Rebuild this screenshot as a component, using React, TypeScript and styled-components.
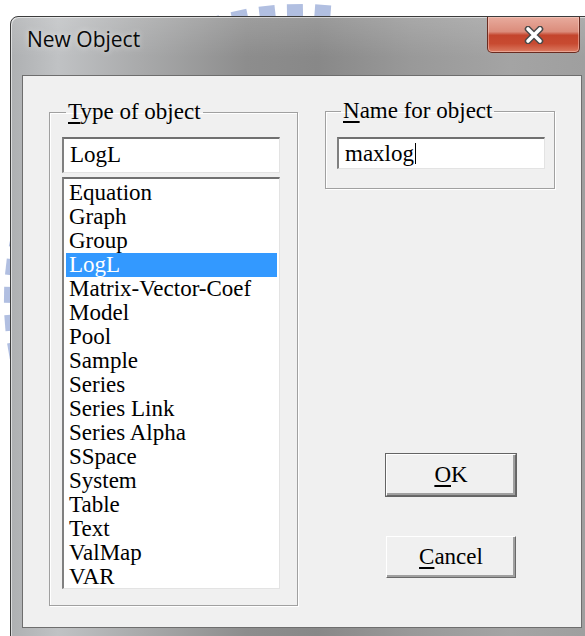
import styled, { createGlobalStyle } from "styled-components";

const GlobalStyle = createGlobalStyle`
  html, body {
    margin: 0;
    padding: 0;
    background: #ffffff;
  }
`;

const OBJECT_TYPES = [
  "Equation",
  "Graph",
  "Group",
  "LogL",
  "Matrix-Vector-Coef",
  "Model",
  "Pool",
  "Sample",
  "Series",
  "Series Link",
  "Series Alpha",
  "SSpace",
  "System",
  "Table",
  "Text",
  "ValMap",
  "VAR",
];

// angles (deg) of the ring segments in the background emblem
const EMBLEM_ANGLES = Array.from({ length: 22 }, (_, i) => -111 + i * 5.5);

const Emblem = () => (
  <S.Emblem width="585" height="636" viewBox="0 0 585 636">
    {EMBLEM_ANGLES.map((a) => (
      <rect
        key={a}
        x={292}
        y={4}
        width={16}
        height={34}
        fill="#b1bfe1"
        transform={`rotate(${a} 300 300)`}
      />
    ))}
  </S.Emblem>
);

const CloseGlyph = () => (
  <svg width="22" height="18" viewBox="0 0 22 18">
    <path
      d="M5 3 L17 15 M17 3 L5 15"
      stroke="#4a4a4a"
      strokeWidth="6.5"
      strokeLinecap="round"
      fill="none"
    />
    <path
      d="M5 3 L17 15 M17 3 L5 15"
      stroke="#ffffff"
      strokeWidth="3.6"
      strokeLinecap="round"
      fill="none"
    />
  </svg>
);

const App = () => {
  return (
    <>
      <GlobalStyle />
      <S.Page>
        <Emblem />
        <S.Window>
          <S.TitleBar>
            <S.Title>New Object</S.Title>
            <S.CloseBtn aria-label="Close">
              <CloseGlyph />
            </S.CloseBtn>
          </S.TitleBar>
          <S.Client>
            <S.TypeGroup>
              <S.Legend>
                <u>T</u>ype of object
              </S.Legend>
              <S.Field $height={36}>LogL</S.Field>
              <S.List>
                {OBJECT_TYPES.map((t) => (
                  <S.ListItem key={t} $selected={t === "LogL"}>
                    {t}
                  </S.ListItem>
                ))}
              </S.List>
            </S.TypeGroup>
            <S.RightColumn>
              <S.NameGroup>
                <S.Legend>
                  <u>N</u>ame for object
                </S.Legend>
                <S.Field $height={32}>
                  maxlog
                  <S.Caret />
                </S.Field>
              </S.NameGroup>
              <S.Buttons>
                <S.Button $default>
                  <u>O</u>K
                </S.Button>
                <S.Button>
                  <u>C</u>ancel
                </S.Button>
              </S.Buttons>
            </S.RightColumn>
          </S.Client>
        </S.Window>
      </S.Page>
    </>
  );
};

const S = {
  Page: styled.div`
    position: relative;
    width: 585px;
    height: 636px;
    overflow: hidden;
    background: #ffffff;
  `,

  Emblem: styled.svg`
    position: absolute;
    top: 0;
    left: 0;
    z-index: 0;
  `,

  Window: styled.div`
    position: relative;
    z-index: 1;
    box-sizing: border-box;
    margin: 16px 0 0 10px;
    width: 590px;
    height: 640px;
    border: 1px solid #3c3c3c;
    border-radius: 8px 8px 0 0;
    background:
      linear-gradient(180deg, rgba(255, 255, 255, 0.15) 0px, rgba(255, 255, 255, 0) 40px),
      linear-gradient(
        90deg,
        #aeb0b2 0%,
        #c0c2c4 8%,
        #a9aaab 22%,
        #8d8d8d 40%,
        #888888 52%,
        #999999 68%,
        #a4a4a4 85%,
        #9e9e9e 100%
      );
    box-shadow: inset 1px 1px 0 rgba(255, 255, 255, 0.55);
  `,

  TitleBar: styled.div`
    display: flex;
    justify-content: space-between;
    align-items: flex-start;
    height: 58px;
    padding-left: 16px;
    padding-right: 19px;
  `,

  Title: styled.div`
    margin-top: 9px;
    font-family: "Open Sans", "Noto Sans", sans-serif;
    font-size: 21px;
    line-height: 26px;
    color: #0a0a0a;
    text-shadow: 0 0 6px rgba(255, 255, 255, 0.7);
  `,

  CloseBtn: styled.button`
    display: flex;
    align-items: center;
    justify-content: center;
    width: 93px;
    height: 36px;
    padding: 0;
    border: 1px solid #6a2b20;
    border-top: none;
    border-radius: 0 0 5px 5px;
    background: linear-gradient(
      180deg,
      #e8ab9d 0%,
      #db8c7b 42%,
      #c4452d 52%,
      #c84a31 76%,
      #db7b62 100%
    );
    box-shadow: inset 0 0 0 1px rgba(255, 220, 210, 0.45);
  `,

  Client: styled.div`
    box-sizing: border-box;
    display: flex;
    align-items: flex-start;
    margin-left: 11px;
    width: 560px;
    height: 553px;
    border: 1px solid #6e6e6e;
    background: #f0f0f0;
    padding: 24px 0 0 26px;
  `,

  TypeGroup: styled.fieldset`
    box-sizing: border-box;
    width: 249px;
    height: 506px;
    margin: 0;
    padding: 13px 17px 16px 12px;
    min-width: 0;
    border: 1px solid #a0a0a0;
    box-shadow: inset 1px 1px 0 #ffffff, 1px 1px 0 #ffffff;
    display: flex;
    flex-direction: column;
  `,

  NameGroup: styled.fieldset`
    box-sizing: border-box;
    width: 230px;
    height: 90px;
    margin: 0;
    padding: 14px 9px 19px 11px;
    min-width: 0;
    border: 1px solid #a0a0a0;
    box-shadow: inset 1px 1px 0 #ffffff, 1px 1px 0 #ffffff;
  `,

  Legend: styled.legend`
    margin-left: 4px;
    padding: 0 2px;
    font-family: "Liberation Serif", "Times New Roman", serif;
    font-size: 23px;
    line-height: 24px;
    color: #000;

    u {
      text-underline-offset: 3px;
    }
  `,

  Field: styled.div<{ $height: number }>`
    box-sizing: border-box;
    display: flex;
    align-items: center;
    height: ${(p) => p.$height}px;
    padding-left: 6px;
    background: #ffffff;
    border-style: solid;
    border-width: 2px 1px 1px 2px;
    border-color: #707070 #e3e3e3 #e3e3e3 #808080;
    font-family: "Liberation Serif", "Times New Roman", serif;
    font-size: 23px;
    color: #000;
  `,

  Caret: styled.span`
    display: inline-block;
    width: 1px;
    height: 21px;
    margin-left: 1px;
    background: #000;
  `,

  List: styled.div`
    box-sizing: border-box;
    margin-top: 4px;
    height: 413px;
    padding: 2px 2px 0 2px;
    background: #ffffff;
    border-style: solid;
    border-width: 2px 1px 1px 2px;
    border-color: #707070 #e3e3e3 #e3e3e3 #808080;
    overflow: hidden;
  `,

  ListItem: styled.div<{ $selected?: boolean }>`
    height: 24px;
    line-height: 24px;
    padding-left: 3px;
    font-family: "Liberation Serif", "Times New Roman", serif;
    font-size: 23px;
    white-space: nowrap;
    color: ${(p) => (p.$selected ? "#ffffff" : "#000000")};
    background: ${(p) => (p.$selected ? "#3399ff" : "transparent")};
  `,

  RightColumn: styled.div`
    display: flex;
    flex-direction: column;
    margin-left: 27px;
    margin-top: -1px;
  `,

  Buttons: styled.div`
    display: flex;
    flex-direction: column;
    gap: 40px;
    margin: 265px 0 0 61px;
  `,

  Button: styled.button<{ $default?: boolean }>`
    box-sizing: border-box;
    width: 130px;
    height: 42px;
    padding: 0;
    background: #f0f0f0;
    border: 1px solid;
    border-color: #ffffff #696969 #696969 #ffffff;
    box-shadow: inset -2px -2px 0 #a0a0a0;
    outline: ${(p) => (p.$default ? "1px solid #646464" : "none")};
    font-family: "Liberation Serif", "Times New Roman", serif;
    font-size: 23px;
    color: #000;

    u {
      text-underline-offset: 3px;
    }
  `,
};

export default App;
